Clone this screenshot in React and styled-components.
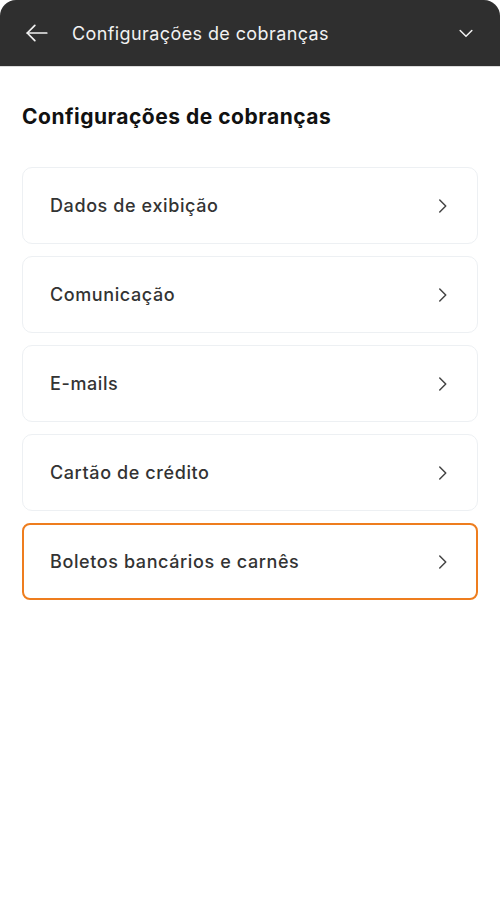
import React from 'react';
import styled, { createGlobalStyle } from 'styled-components';

const GlobalStyle = createGlobalStyle`
  html, body {
    margin: 0;
    padding: 0;
    background: #ffffff;
  }
  body {
    font-family: Inter, "Noto Sans", "Liberation Sans", sans-serif;
    -webkit-font-smoothing: antialiased;
  }
`;

const Page = styled.div`
  width: 500px;
  min-height: 900px;
  background: #ffffff;
`;

const TopBar = styled.header`
  height: 67px;
  background: #2f2f2f;
  border-radius: 16px 16px 0 0;
  border-bottom: 1px solid #dcdcdc;
  display: flex;
  align-items: center;
  padding: 0 24px;
  color: #f2f2f2;
  box-sizing: border-box;
`;

const IconButton = styled.button`
  background: none;
  border: none;
  padding: 0;
  color: inherit;
  display: flex;
  align-items: center;
  cursor: pointer;
`;

const BarTitle = styled.h1`
  flex: 1;
  margin: 0 0 0 22px;
  font-size: 18px;
  font-weight: 400;
  letter-spacing: 0.4px;
`;

const Content = styled.main`
  padding: 37px 22px 0 22px;
`;

const PageTitle = styled.h2`
  margin: 0 0 38px 0;
  font-size: 21px;
  font-weight: 700;
  letter-spacing: 0.5px;
  color: #111111;
`;

const List = styled.div`
  display: flex;
  flex-direction: column;
  gap: 12px;
`;

const Item = styled.button`
  height: 77px;
  width: 100%;
  box-sizing: border-box;
  display: flex;
  align-items: center;
  justify-content: space-between;
  padding: ${(p) => (p.$active ? '0 25px 0 26px' : '0 26px 0 27px')};
  background: #ffffff;
  border: ${(p) => (p.$active ? '2px solid #ee7d1e' : '1px solid #edf0f3')};
  border-radius: ${(p) => (p.$active ? '8px' : '10px')};
  font-family: inherit;
  font-size: 18px;
  font-weight: 500;
  letter-spacing: 0.6px;
  color: #333333;
  text-align: left;
  cursor: pointer;
`;

const items = [
  'Dados de exibição',
  'Comunicação',
  'E-mails',
  'Cartão de crédito',
  'Boletos bancários e carnês',
];

const ArrowLeft = () => (
  <svg width="26" height="26" viewBox="0 0 24 24" fill="none" stroke="currentColor" strokeWidth="1.6" strokeLinecap="round" strokeLinejoin="round">
    <path d="M21 12H3" />
    <path d="M10 5l-7 7 7 7" />
  </svg>
);

const ChevronDown = () => (
  <svg width="20" height="20" viewBox="0 0 24 24" fill="none" stroke="currentColor" strokeWidth="1.8" strokeLinecap="round" strokeLinejoin="round">
    <path d="M5 9l7 7 7-7" />
  </svg>
);

const ChevronRight = () => (
  <svg width="18" height="18" viewBox="0 0 24 24" fill="none" stroke="#444" strokeWidth="2" strokeLinecap="round" strokeLinejoin="round">
    <path d="M9 4l8 8-8 8" />
  </svg>
);

export default function App() {
  return (
    <Page>
      <GlobalStyle />
      <TopBar>
        <IconButton aria-label="Voltar"><ArrowLeft /></IconButton>
        <BarTitle>Configurações de cobranças</BarTitle>
        <IconButton aria-label="Abrir"><ChevronDown /></IconButton>
      </TopBar>
      <Content>
        <PageTitle>Configurações de cobranças</PageTitle>
        <List>
          {items.map((label, i) => (
            <Item key={label} $active={i === items.length - 1}>
              <span>{label}</span>
              <ChevronRight />
            </Item>
          ))}
        </List>
      </Content>
    </Page>
  );
}
